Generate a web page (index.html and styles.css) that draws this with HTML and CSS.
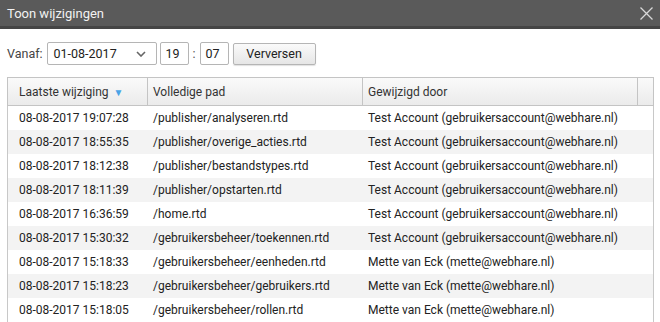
FILE: index.html
```html
<!DOCTYPE html>
<html>
<head>
<meta charset="utf-8">
<link rel="stylesheet" href="styles.css">
</head>
<body>
<div class="dialog">
  <div class="titlebar">
    <span class="title">Toon wijzigingen</span>
    <svg class="close" width="13" height="13" viewBox="0 0 13 13"><path d="M0.5 0.5 L12.5 12.5 M12.5 0.5 L0.5 12.5" stroke="#d8d8d8" stroke-width="1.3" fill="none"/></svg>
  </div>
  <div class="content">
    <div class="toolbar">
      <span class="label">Vanaf:</span>
      <div class="select"><span>01-08-2017</span>
        <svg width="10" height="6" viewBox="0 0 10 6"><path d="M1 1 L5 5 L9 1" stroke="#666" stroke-width="1.6" fill="none"/></svg>
      </div>
      <div class="num">19</div>
      <span class="colon">:</span>
      <div class="num">07</div>
      <div class="btn">Verversen</div>
    </div>
    <div class="table">
      <div class="head">
        <div class="hc c1">Laatste wijziging <span class="sort">▼</span></div>
        <div class="hc c2">Volledige pad</div>
        <div class="hc c3">Gewijzigd door</div>
        <div class="hc c4"></div>
      </div>
      <div class="body">
        <div class="row"><div class="c1">08-08-2017 19:07:28</div><div class="c2">/publisher/analyseren.rtd</div><div class="c3">Test Account (gebruikersaccount@webhare.nl)</div></div>
        <div class="row"><div class="c1">08-08-2017 18:55:35</div><div class="c2">/publisher/overige_acties.rtd</div><div class="c3">Test Account (gebruikersaccount@webhare.nl)</div></div>
        <div class="row"><div class="c1">08-08-2017 18:12:38</div><div class="c2">/publisher/bestandstypes.rtd</div><div class="c3">Test Account (gebruikersaccount@webhare.nl)</div></div>
        <div class="row"><div class="c1">08-08-2017 18:11:39</div><div class="c2">/publisher/opstarten.rtd</div><div class="c3">Test Account (gebruikersaccount@webhare.nl)</div></div>
        <div class="row"><div class="c1">08-08-2017 16:36:59</div><div class="c2">/home.rtd</div><div class="c3">Test Account (gebruikersaccount@webhare.nl)</div></div>
        <div class="row"><div class="c1">08-08-2017 15:30:32</div><div class="c2">/gebruikersbeheer/toekennen.rtd</div><div class="c3">Test Account (gebruikersaccount@webhare.nl)</div></div>
        <div class="row"><div class="c1">08-08-2017 15:18:33</div><div class="c2">/gebruikersbeheer/eenheden.rtd</div><div class="c3">Mette van Eck (mette@webhare.nl)</div></div>
        <div class="row"><div class="c1">08-08-2017 15:18:23</div><div class="c2">/gebruikersbeheer/gebruikers.rtd</div><div class="c3">Mette van Eck (mette@webhare.nl)</div></div>
        <div class="row"><div class="c1">08-08-2017 15:18:05</div><div class="c2">/gebruikersbeheer/rollen.rtd</div><div class="c3">Mette van Eck (mette@webhare.nl)</div></div>
      </div>
    </div>
  </div>
</div>
</body>
</html>
```
FILE: styles.css
```css
html, body {
  margin: 0;
  padding: 0;
  background: #fff;
  font-family: Roboto, "Liberation Sans", sans-serif;
  font-size: 12px;
  color: #222;
  overflow: hidden;
}
.titlebar {
  height: 26px;
  background: #5a5a5a;
  border-bottom: 3px solid #454545;
  display: flex;
  align-items: center;
  justify-content: space-between;
  padding: 0 7px 0 7px;
}
.title {
  color: #f2f2f2;
  font-size: 13px;
}
.close {
  display: block;
}
.content {
  padding: 13px 6px 0 7px;
}
.toolbar {
  display: flex;
  align-items: center;
  height: 23px;
  font-size: 12.5px;
}
.label {
  color: #444;
  margin-right: 4px;
}
.select {
  box-sizing: border-box;
  width: 110px;
  height: 23px;
  border: 1px solid #b5b5b5;
  border-radius: 2px;
  display: flex;
  align-items: center;
  justify-content: space-between;
  padding: 0 10px 0 6px;
  margin-right: 3px;
}
.num {
  box-sizing: border-box;
  width: 29px;
  height: 23px;
  border: 1px solid #b5b5b5;
  border-radius: 2px;
  display: flex;
  align-items: center;
  padding-left: 5px;
}
.colon {
  width: 11px;
  text-align: center;
  color: #555;
}
.btn {
  box-sizing: border-box;
  margin-left: 4px;
  width: 83px;
  height: 22px;
  border: 1px solid #b5b5b5;
  border-radius: 2px;
  background: linear-gradient(#fafafa, #e6e6e6);
  display: flex;
  align-items: center;
  justify-content: center;
  box-shadow: 0 1px 1px rgba(0,0,0,0.12);
}
.table {
  margin-top: 12px;
  width: 647px;
}
.head {
  display: flex;
  height: 27px;
  border: 1px solid #c4c4c4;
  background: linear-gradient(#fafafa, #ebebeb);
}
.hc {
  box-sizing: border-box;
  display: flex;
  align-items: center;
  border-right: 1px solid #c4c4c4;
  padding-left: 11px;
  color: #333;
}
.head .c1 { width: 140px; }
.head .c2 { width: 215px; padding-left: 5px; }
.head .c3 { width: 275px; padding-left: 5px; }
.head .c4 { flex: 1; border-right: none; }
.sort {
  color: #4aa3e6;
  font-size: 10px;
  margin-left: 5px;
  margin-top: 1px;
}
.body {
  border-left: 1px solid #c8c8c8;
  border-right: 1px solid #c8c8c8;
}
.row {
  display: flex;
  height: 24px;
  align-items: center;
}
.row:nth-child(even) {
  background: #f3f3f3;
}
.row .c1 { width: 140px; padding-left: 11px; box-sizing: border-box; }
.row .c2 { width: 215px; padding-left: 5px; box-sizing: border-box; }
.row .c3 { padding-left: 5px; }
```
